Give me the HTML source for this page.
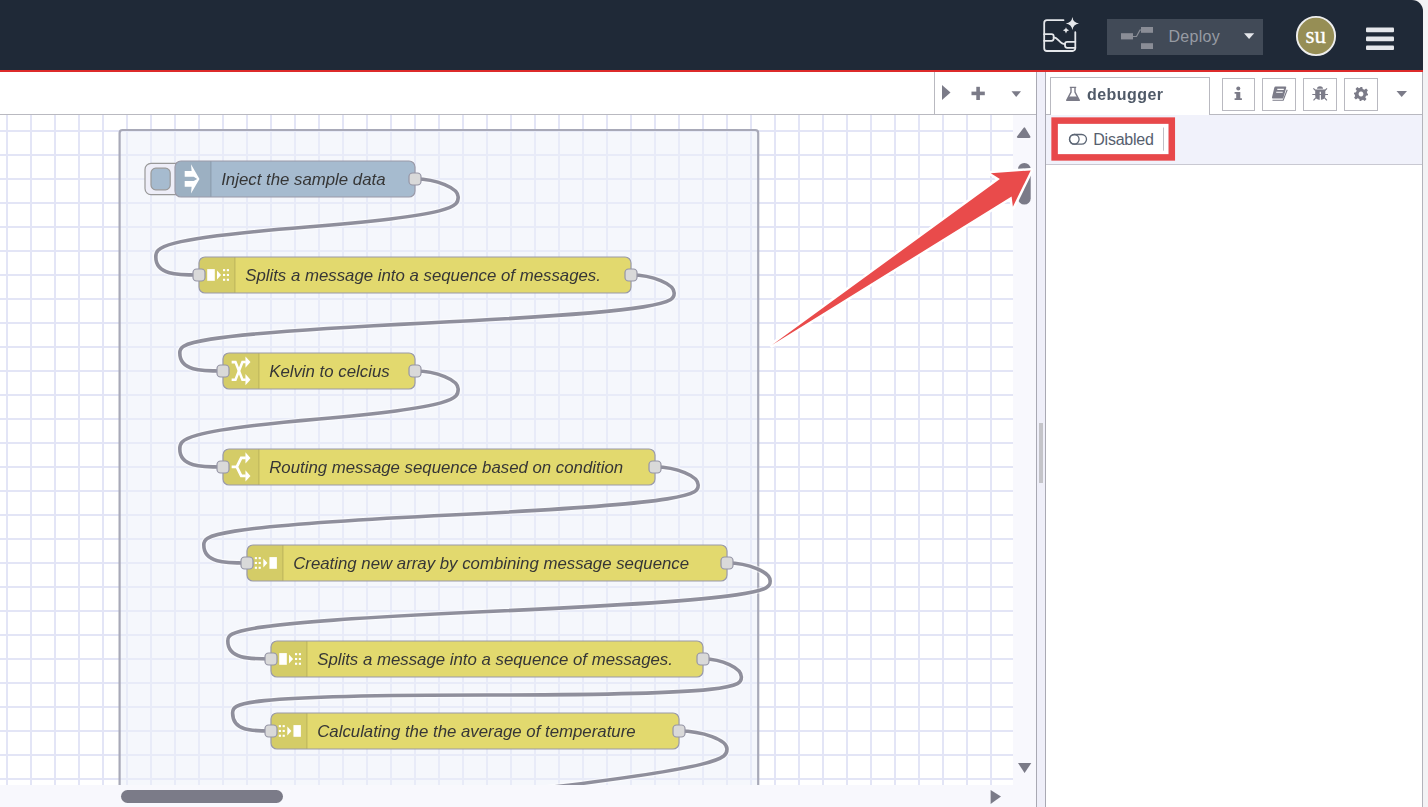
<!DOCTYPE html>
<html>
<head>
<meta charset="utf-8">
<style>
html,body{margin:0;padding:0;}
body{width:1428px;height:807px;overflow:hidden;position:relative;background:#f3f3f5;font-family:"Liberation Sans",sans-serif;}
.abs{position:absolute;}
#header{left:0;top:0;width:1423px;height:70px;background:#1f2937;border-top-right-radius:11px;}
#redline{left:0;top:70px;width:1423px;height:2px;background:#dd2b2b;border-bottom:1px solid #d3dbe0;}
#main{left:0;top:72px;width:1423px;height:735px;background:#fff;}
#ws-tabs{left:0;top:72px;width:1036px;height:42px;background:#fff;border-bottom:1px solid #b9b9c0;}
#ws-btns{left:934px;top:72px;width:102px;height:42px;border-left:1px solid #b9b9c0;}
#canvas{left:0;top:115px;width:1013px;height:670px;overflow:hidden;will-change:transform;}
#vscroll{left:1013px;top:115px;width:23px;height:670px;background:#f8f8fd;}
#hscroll{left:0;top:785px;width:1036px;height:22px;background:#f8f8fd;}
#ws-border{left:1036px;top:72px;width:1px;height:735px;background:#a9a9b3;}
#sep{left:1037px;top:72px;width:8px;height:735px;background:#efeff9;}
#sb-border{left:1045px;top:72px;width:1px;height:735px;background:#a9a9b3;}
#sidebar{left:1046px;top:72px;width:376px;height:735px;background:#fff;}
#sb-rborder{left:1422px;top:72px;width:1px;height:735px;background:#b3b3bb;}
#sb-tabs{left:1046px;top:72px;width:376px;height:42px;border-bottom:1px solid #b9b9c0;}
#sb-tab{left:1050px;top:77px;width:158px;height:37px;border:1px solid #b9b9c0;border-bottom:none;background:#fff;}
#sb-toolbar{left:1046px;top:115px;width:376px;height:49px;background:#f1f2fb;border-bottom:1px solid #c9c9d2;}
.tbtn{position:absolute;top:78px;width:31px;height:31px;border:1px solid #b9b9c0;background:#fff;}
</style>
</head>
<body>
<div class="abs" id="main"></div>
<div class="abs" id="header">
  <svg class="abs" style="left:0;top:0" width="1423" height="70">
    <!-- AI icon -->
    <g fill="none" stroke="#e5e7eb" stroke-width="1.8" stroke-linecap="round">
      <path d="M1063.5 20.2 H1047 A2.8 2.8 0 0 0 1044.2 23 V48.2 A2.8 2.8 0 0 0 1047 51 H1072.5 A2.8 2.8 0 0 0 1075.3 48.2 V32.2"/>
      <path d="M1044.2 34.2 H1051.5 A2.2 2.2 0 0 1 1053.7 36.4 V38.6 A2.2 2.2 0 0 1 1051.5 40.8 H1044.2"/>
      <path d="M1053.7 37.4 C1058 37.4 1060 44.2 1065 44.2"/>
      <path d="M1075.3 41.8 H1067.2 A2.2 2.2 0 0 0 1065 44 V45.6 A2.2 2.2 0 0 0 1067.2 47.8 H1075.3"/>
    </g>
    <path fill="#e5e7eb" d="M1072.4 17 Q1073.2 22.8 1079 23.5 Q1073.2 24.2 1072.4 30 Q1071.6 24.2 1065.8 23.5 Q1071.6 22.8 1072.4 17Z"/>
    <path fill="#e5e7eb" d="M1066 27.2 Q1066.4 29.9 1069.1 30.3 Q1066.4 30.7 1066 33.4 Q1065.6 30.7 1062.9 30.3 Q1065.6 29.9 1066 27.2Z"/>
    <!-- deploy button -->
    <rect x="1107" y="19" width="156" height="36" fill="#414a57"/>
    <g fill="#8a8d96">
      <rect x="1121" y="33.2" width="12" height="6.2"/>
      <rect x="1141" y="27" width="12" height="5.8"/>
      <rect x="1141" y="43.2" width="12" height="5.8"/>
      <path d="M1133 36.5 L1136.5 36.5 L1140 30 L1141 30" fill="none" stroke="#8a8d96" stroke-width="1.2"/>
    </g>
    <text x="1168.5" y="41.8" font-family="Liberation Sans" font-size="16" letter-spacing="0.3" fill="#979ba3">Deploy</text>
    <path d="M1244 33.3 H1254.2 L1249.1 39.1Z" fill="#e5e7eb"/>
    <!-- avatar -->
    <circle cx="1316" cy="36" r="19.1" fill="#968e55" stroke="#eeeeee" stroke-width="1.9"/>
    <text x="1315.7" y="42.8" text-anchor="middle" font-family="Liberation Serif" font-size="23" fill="#fff" stroke="#fff" stroke-width="0.3">su</text>
    <!-- hamburger -->
    <rect x="1366" y="27.6" width="28" height="4.6" rx="1" fill="#e5e7eb"/>
    <rect x="1366" y="36.6" width="28" height="4.6" rx="1" fill="#e5e7eb"/>
    <rect x="1366" y="45.5" width="28" height="4.6" rx="1" fill="#e5e7eb"/>
  </svg>
</div>
<div class="abs" id="redline"></div>

<div class="abs" id="ws-tabs"></div>
<div class="abs" id="ws-btns">
  <svg class="abs" style="left:-935px;top:-72px" width="1036" height="114">
    <path d="M942 85 L950.5 92.5 L942 100Z" fill="#7b7b88"/>
    <rect x="971.5" y="91.6" width="13.3" height="3.6" fill="#7b7b88"/>
    <rect x="976.3" y="86.8" width="3.6" height="13.2" fill="#7b7b88"/>
    <path d="M1011.5 91.3 H1021 L1016.2 97Z" fill="#7b7b88"/>
  </svg>
</div>
<div class="abs" id="canvas">
  <svg width="1013" height="670" style="display:block"><rect x="0" y="0" width="1013" height="670" fill="#fff"/><rect x="119.6" y="15" width="638.6" height="700" rx="3" fill="#f5f7fc"/><path d="M7 0V680 M31 0V680 M55 0V680 M79 0V680 M103 0V680 M127 0V680 M151 0V680 M175 0V680 M199 0V680 M223 0V680 M247 0V680 M271 0V680 M295 0V680 M319 0V680 M343 0V680 M367 0V680 M391 0V680 M415 0V680 M439 0V680 M463 0V680 M487 0V680 M511 0V680 M535 0V680 M559 0V680 M583 0V680 M607 0V680 M631 0V680 M655 0V680 M679 0V680 M703 0V680 M727 0V680 M751 0V680 M775 0V680 M799 0V680 M823 0V680 M847 0V680 M871 0V680 M895 0V680 M919 0V680 M943 0V680 M967 0V680 M991 0V680 M0 16H1013 M0 40H1013 M0 64H1013 M0 88H1013 M0 112H1013 M0 136H1013 M0 160H1013 M0 184H1013 M0 208H1013 M0 232H1013 M0 256H1013 M0 280H1013 M0 304H1013 M0 328H1013 M0 352H1013 M0 376H1013 M0 400H1013 M0 424H1013 M0 448H1013 M0 472H1013 M0 496H1013 M0 520H1013 M0 544H1013 M0 568H1013 M0 592H1013 M0 616H1013 M0 640H1013 M0 664H1013" stroke="#e3e5f6" stroke-width="2" fill="none"/><rect x="119.6" y="15" width="638.6" height="700" rx="3" fill="#f5f7fc" fill-opacity="0.3" stroke="#a8a9b8" stroke-width="2.2"/><g transform="translate(7,-104) scale(1.2)"><path d="M 340 140 C 358.0 140 376.0 147.5 376.0 155.0 S 376.0 170.0 250 180 S 124.0 197.5 124.0 205.0 C 124.0 220 142.0 220 160 220" fill="none" stroke="#fff" stroke-width="5" stroke-linecap="round" stroke-opacity="0.5"/><path d="M 340 140 C 358.0 140 376.0 147.5 376.0 155.0 S 376.0 170.0 250 180 S 124.0 197.5 124.0 205.0 C 124.0 220 142.0 220 160 220" fill="none" stroke="#8f8f9c" stroke-width="3"/><path d="M 520 220 C 538.0 220 556.0 227.5 556.0 235.0 S 556.0 250.0 350 260 S 144.0 277.5 144.0 285.0 C 144.0 300 162.0 300 180 300" fill="none" stroke="#fff" stroke-width="5" stroke-linecap="round" stroke-opacity="0.5"/><path d="M 520 220 C 538.0 220 556.0 227.5 556.0 235.0 S 556.0 250.0 350 260 S 144.0 277.5 144.0 285.0 C 144.0 300 162.0 300 180 300" fill="none" stroke="#8f8f9c" stroke-width="3"/><path d="M 340 300 C 358.0 300 376.0 307.5 376.0 315.0 S 376.0 330.0 260 340 S 144.0 357.5 144.0 365.0 C 144.0 380 162.0 380 180 380" fill="none" stroke="#fff" stroke-width="5" stroke-linecap="round" stroke-opacity="0.5"/><path d="M 340 300 C 358.0 300 376.0 307.5 376.0 315.0 S 376.0 330.0 260 340 S 144.0 357.5 144.0 365.0 C 144.0 380 162.0 380 180 380" fill="none" stroke="#8f8f9c" stroke-width="3"/><path d="M 540 380 C 558.0 380 576.0 387.5 576.0 395.0 S 576.0 410.0 370 420 S 164.0 437.5 164.0 445.0 C 164.0 460 182.0 460 200 460" fill="none" stroke="#fff" stroke-width="5" stroke-linecap="round" stroke-opacity="0.5"/><path d="M 540 380 C 558.0 380 576.0 387.5 576.0 395.0 S 576.0 410.0 370 420 S 164.0 437.5 164.0 445.0 C 164.0 460 182.0 460 200 460" fill="none" stroke="#8f8f9c" stroke-width="3"/><path d="M 600 460 C 618.0 460 636.0 467.5 636.0 475.0 S 636.0 490.0 410 500 S 184.0 517.5 184.0 525.0 C 184.0 540 202.0 540 220 540" fill="none" stroke="#fff" stroke-width="5" stroke-linecap="round" stroke-opacity="0.5"/><path d="M 600 460 C 618.0 460 636.0 467.5 636.0 475.0 S 636.0 490.0 410 500 S 184.0 517.5 184.0 525.0 C 184.0 540 202.0 540 220 540" fill="none" stroke="#8f8f9c" stroke-width="3"/><path d="M 580 540 C 596.0 540 612.0 547.5 612.0 555.0 S 612.0 570 400 570 S 188.0 577.5 188.0 585.0 C 188.0 600 204.0 600 220 600" fill="none" stroke="#fff" stroke-width="5" stroke-linecap="round" stroke-opacity="0.5"/><path d="M 580 540 C 596.0 540 612.0 547.5 612.0 555.0 S 612.0 570 400 570 S 188.0 577.5 188.0 585.0 C 188.0 600 204.0 600 220 600" fill="none" stroke="#8f8f9c" stroke-width="3"/><path d="M 560 600 C 580.0 600 600.0 607.5 600.0 615.0 S 600.0 630.0 427 650 S 255.0 677.5 255.0 685.0 C 255.0 700 275.0 700 295 700" fill="none" stroke="#fff" stroke-width="5" stroke-linecap="round" stroke-opacity="0.5"/><path d="M 560 600 C 580.0 600 600.0 607.5 600.0 615.0 S 600.0 630.0 427 650 S 255.0 677.5 255.0 685.0 C 255.0 700 275.0 700 295 700" fill="none" stroke="#8f8f9c" stroke-width="3"/><g transform="translate(140,125)"><rect x="-25" y="2" width="32" height="26" rx="5" fill="#eeeef8" stroke="#999" stroke-width="1"/><rect x="-20" y="6" width="16" height="18" rx="4" fill="#a6bbcf" stroke="#999" stroke-width="1"/><rect x="0" y="0" width="200" height="30" rx="5" fill="#a6bbcf" stroke="#9a9aa8" stroke-width="1"/><path d="M5 0.5 H30 V29.5 H5 A4.5 4.5 0 0 1 0.5 25 V5 A4.5 4.5 0 0 1 5 0.5Z" fill="#000" fill-opacity="0.06"/><path d="M30 0.5 V29.5" stroke="#000" stroke-opacity="0.12" stroke-width="1"/><path d="M13.33 2.7 L20.4 14.9 L13.33 27.1 L13.83 21.4 L8.08 21.4 L8.08 16.7 L15.6 16.7 L18.5 14.9 L15.6 13.1 L8.08 13.1 L8.08 8.4 L13.83 8.4 Z" fill="#fff"/><text x="38.5" y="20" font-family="Liberation Sans" font-style="italic" font-size="14" fill="#363636">Inject the sample data</text><rect x="195" y="10" width="10" height="10" rx="3" fill="#d9d9d9" stroke="#9595a5" stroke-width="1"/></g><g transform="translate(160,205)"><rect x="0" y="0" width="360" height="30" rx="5" fill="#e2d96e" stroke="#9a9aa8" stroke-width="1"/><path d="M5 0.5 H30 V29.5 H5 A4.5 4.5 0 0 1 0.5 25 V5 A4.5 4.5 0 0 1 5 0.5Z" fill="#000" fill-opacity="0.06"/><path d="M30 0.5 V29.5" stroke="#000" stroke-opacity="0.12" stroke-width="1"/><rect x="6.83" y="10.08" width="6.34" height="9.75" fill="#fff"/><path d="M15 11.33 L18.4 15 L15 18.75Z" fill="#fff"/><rect x="20.0" y="10.08" width="1.8" height="1.75" fill="#fff"/><rect x="20.0" y="14.1" width="1.8" height="1.75" fill="#fff"/><rect x="20.0" y="18.1" width="1.8" height="1.75" fill="#fff"/><rect x="23.2" y="10.08" width="1.8" height="1.75" fill="#fff"/><rect x="23.2" y="14.1" width="1.8" height="1.75" fill="#fff"/><rect x="23.2" y="18.1" width="1.8" height="1.75" fill="#fff"/><text x="38.5" y="20" font-family="Liberation Sans" font-style="italic" font-size="14" fill="#363636">Splits a message into a sequence of messages.</text><rect x="-5" y="10" width="10" height="10" rx="3" fill="#d9d9d9" stroke="#9595a5" stroke-width="1"/><rect x="355" y="10" width="10" height="10" rx="3" fill="#d9d9d9" stroke="#9595a5" stroke-width="1"/></g><g transform="translate(180,285)"><rect x="0" y="0" width="160" height="30" rx="5" fill="#e2d96e" stroke="#9a9aa8" stroke-width="1"/><path d="M5 0.5 H30 V29.5 H5 A4.5 4.5 0 0 1 0.5 25 V5 A4.5 4.5 0 0 1 5 0.5Z" fill="#000" fill-opacity="0.06"/><path d="M30 0.5 V29.5" stroke="#000" stroke-opacity="0.12" stroke-width="1"/><path d="M7.2 7.6 H10.4 L16.2 22.2 H19" fill="none" stroke="#fff" stroke-width="2.1"/><path d="M7.2 22.3 H10.4 L16.2 7.5 H19" fill="none" stroke="#fff" stroke-width="2.1"/><path d="M18.7 2.9 L22.9 7.5 L18.7 12.2Z" fill="#fff"/><path d="M18.7 17.5 L22.9 22.2 L18.7 26.9Z" fill="#fff"/><text x="38.5" y="20" font-family="Liberation Sans" font-style="italic" font-size="14" fill="#363636">Kelvin to celcius</text><rect x="-5" y="10" width="10" height="10" rx="3" fill="#d9d9d9" stroke="#9595a5" stroke-width="1"/><rect x="155" y="10" width="10" height="10" rx="3" fill="#d9d9d9" stroke="#9595a5" stroke-width="1"/></g><g transform="translate(180,365)"><rect x="0" y="0" width="360" height="30" rx="5" fill="#e2d96e" stroke="#9a9aa8" stroke-width="1"/><path d="M5 0.5 H30 V29.5 H5 A4.5 4.5 0 0 1 0.5 25 V5 A4.5 4.5 0 0 1 5 0.5Z" fill="#000" fill-opacity="0.06"/><path d="M30 0.5 V29.5" stroke="#000" stroke-opacity="0.12" stroke-width="1"/><path d="M7.2 14.9 H11.5 L15.2 7.4 H19 M11.5 14.9 L15.2 22.4 H19" fill="none" stroke="#fff" stroke-width="2.3"/><path d="M18.7 2.7 L22.9 7.4 L18.7 12.1Z" fill="#fff"/><path d="M18.7 17.7 L22.9 22.4 L18.7 27.1Z" fill="#fff"/><text x="38.5" y="20" font-family="Liberation Sans" font-style="italic" font-size="14" fill="#363636">Routing message sequence based on condition</text><rect x="-5" y="10" width="10" height="10" rx="3" fill="#d9d9d9" stroke="#9595a5" stroke-width="1"/><rect x="355" y="10" width="10" height="10" rx="3" fill="#d9d9d9" stroke="#9595a5" stroke-width="1"/></g><g transform="translate(200,445)"><rect x="0" y="0" width="400" height="30" rx="5" fill="#e2d96e" stroke="#9a9aa8" stroke-width="1"/><path d="M5 0.5 H30 V29.5 H5 A4.5 4.5 0 0 1 0.5 25 V5 A4.5 4.5 0 0 1 5 0.5Z" fill="#000" fill-opacity="0.06"/><path d="M30 0.5 V29.5" stroke="#000" stroke-opacity="0.12" stroke-width="1"/><rect x="6.5" y="10.08" width="1.8" height="1.75" fill="#fff"/><rect x="6.5" y="14.1" width="1.8" height="1.75" fill="#fff"/><rect x="6.5" y="18.1" width="1.8" height="1.75" fill="#fff"/><rect x="9.7" y="10.08" width="1.8" height="1.75" fill="#fff"/><rect x="9.7" y="14.1" width="1.8" height="1.75" fill="#fff"/><rect x="9.7" y="18.1" width="1.8" height="1.75" fill="#fff"/><path d="M13.6 11.33 L17 15 L13.6 18.75Z" fill="#fff"/><rect x="18.7" y="10.08" width="6.2" height="9.75" fill="#fff"/><text x="38.5" y="20" font-family="Liberation Sans" font-style="italic" font-size="14" fill="#363636">Creating new array by combining message sequence</text><rect x="-5" y="10" width="10" height="10" rx="3" fill="#d9d9d9" stroke="#9595a5" stroke-width="1"/><rect x="395" y="10" width="10" height="10" rx="3" fill="#d9d9d9" stroke="#9595a5" stroke-width="1"/></g><g transform="translate(220,525)"><rect x="0" y="0" width="360" height="30" rx="5" fill="#e2d96e" stroke="#9a9aa8" stroke-width="1"/><path d="M5 0.5 H30 V29.5 H5 A4.5 4.5 0 0 1 0.5 25 V5 A4.5 4.5 0 0 1 5 0.5Z" fill="#000" fill-opacity="0.06"/><path d="M30 0.5 V29.5" stroke="#000" stroke-opacity="0.12" stroke-width="1"/><rect x="6.83" y="10.08" width="6.34" height="9.75" fill="#fff"/><path d="M15 11.33 L18.4 15 L15 18.75Z" fill="#fff"/><rect x="20.0" y="10.08" width="1.8" height="1.75" fill="#fff"/><rect x="20.0" y="14.1" width="1.8" height="1.75" fill="#fff"/><rect x="20.0" y="18.1" width="1.8" height="1.75" fill="#fff"/><rect x="23.2" y="10.08" width="1.8" height="1.75" fill="#fff"/><rect x="23.2" y="14.1" width="1.8" height="1.75" fill="#fff"/><rect x="23.2" y="18.1" width="1.8" height="1.75" fill="#fff"/><text x="38.5" y="20" font-family="Liberation Sans" font-style="italic" font-size="14" fill="#363636">Splits a message into a sequence of messages.</text><rect x="-5" y="10" width="10" height="10" rx="3" fill="#d9d9d9" stroke="#9595a5" stroke-width="1"/><rect x="355" y="10" width="10" height="10" rx="3" fill="#d9d9d9" stroke="#9595a5" stroke-width="1"/></g><g transform="translate(220,585)"><rect x="0" y="0" width="340" height="30" rx="5" fill="#e2d96e" stroke="#9a9aa8" stroke-width="1"/><path d="M5 0.5 H30 V29.5 H5 A4.5 4.5 0 0 1 0.5 25 V5 A4.5 4.5 0 0 1 5 0.5Z" fill="#000" fill-opacity="0.06"/><path d="M30 0.5 V29.5" stroke="#000" stroke-opacity="0.12" stroke-width="1"/><rect x="6.5" y="10.08" width="1.8" height="1.75" fill="#fff"/><rect x="6.5" y="14.1" width="1.8" height="1.75" fill="#fff"/><rect x="6.5" y="18.1" width="1.8" height="1.75" fill="#fff"/><rect x="9.7" y="10.08" width="1.8" height="1.75" fill="#fff"/><rect x="9.7" y="14.1" width="1.8" height="1.75" fill="#fff"/><rect x="9.7" y="18.1" width="1.8" height="1.75" fill="#fff"/><path d="M13.6 11.33 L17 15 L13.6 18.75Z" fill="#fff"/><rect x="18.7" y="10.08" width="6.2" height="9.75" fill="#fff"/><text x="38.5" y="20" font-family="Liberation Sans" font-style="italic" font-size="14" fill="#363636">Calculating the the average of temperature</text><rect x="-5" y="10" width="10" height="10" rx="3" fill="#d9d9d9" stroke="#9595a5" stroke-width="1"/><rect x="335" y="10" width="10" height="10" rx="3" fill="#d9d9d9" stroke="#9595a5" stroke-width="1"/></g></g></svg>
</div>
<div class="abs" id="vscroll">
  <svg width="23" height="670" style="display:block">
    <path d="M11.6 12.8 Q12.3 11.8 13 12.8 L18.3 21.6 Q18.8 23 17.3 23 H5.9 Q4.4 23 4.9 21.6Z" fill="#7b7b88" transform="translate(-0.9,0)"/>
    <rect x="5" y="48" width="12.7" height="41.6" rx="6.3" fill="#7b7b88"/>
    <path d="M5 648 H18.3 L11.6 658Z" fill="#7b7b88"/>
  </svg>
</div>
<div class="abs" id="hscroll">
  <svg width="1036" height="22" style="display:block">
    <rect x="121" y="5" width="162" height="13" rx="6.5" fill="#7b7b88"/>
    <path d="M990.6 5 L1001 11.5 L990.6 19Z" fill="#7b7b88"/>
  </svg>
</div>
<div class="abs" id="ws-border"></div>
<div class="abs" id="sep">
  <div class="abs" style="left:2px;top:351px;width:4px;height:60px;background:#c4c4c9"></div>
</div>
<div class="abs" id="sb-border"></div>
<div class="abs" id="sidebar"></div>
<div class="abs" id="sb-tabs"></div>
<div class="abs" id="sb-tab"></div>
<div class="abs" id="sb-toolbar"></div>
<div class="abs" id="sb-rborder"></div>
<div class="tbtn" style="left:1222px"></div>
<div class="tbtn" style="left:1262px;width:32px"></div>
<div class="tbtn" style="left:1303px;width:32px"></div>
<div class="tbtn" style="left:1344px;width:32px"></div>
<svg class="abs" style="left:0;top:0" width="1428" height="807">
  <!-- flask -->
  <path d="M1069.8 87.4 H1076.2 M1071 87.8 V92.2 L1066.8 100.2 H1079.2 L1075 92.2 V87.8" fill="none" stroke="#7b7b88" stroke-width="1.4" stroke-linejoin="round"/>
  <path d="M1068.7 96.6 H1077.3 L1079.8 101 H1066.2Z" fill="#7b7b88"/>
  <text x="1087" y="99.6" font-family="Liberation Sans" font-weight="bold" font-size="16" letter-spacing="0.45" fill="#505a68">debugger</text>
  <!-- info -->
  <circle cx="1238.3" cy="88.6" r="2" fill="#7b7b88"/><path d="M1234.6 92 H1240.3 V98.2 H1241.9 V100 H1234.6 V98.2 H1236.2 V93.8 H1234.6Z" fill="#7b7b88"/>
  <!-- book -->
  <path d="M1275.6 86.5 H1285.4 Q1286.6 86.5 1286.2 87.8 L1283.2 98.6 H1273 Q1271.6 98.6 1272 97.2 L1274.3 87.7 Q1274.6 86.5 1275.6 86.5Z" fill="#7b7b88"/>
  <path d="M1277.3 89.4 H1283.8 M1276.2 92.3 H1282.7" stroke="#fff" stroke-width="1.1"/>
  <path d="M1272.5 100.2 H1283.2 L1287.2 89.7" fill="none" stroke="#7b7b88" stroke-width="1.1"/>
  <!-- bug -->
  <path d="M1317 88.8 A3 2.6 0 0 1 1323 88.8Z" fill="#7b7b88"/>
  <path d="M1315.2 89.4 H1325.3 V95.8 Q1325.3 99.9 1320.2 99.9 Q1315.2 99.9 1315.2 95.8Z" fill="#7b7b88"/>
  <path d="M1320.3 91.8 V99.9" stroke="#fff" stroke-width="1.2"/>
  <path d="M1312.3 94.5 H1328 M1313.4 88.4 L1315.6 90.6 M1327 88.4 L1324.8 90.6 M1313.5 100.3 L1316 97.6 M1326.9 100.3 L1324.4 97.6" stroke="#7b7b88" stroke-width="1.2"/>
  <!-- gear -->
  <g transform="translate(1361,94)">
    <path fill="#7b7b88" fill-rule="evenodd" d="M-1.3 -7 H1.3 L1.7 -5 L3.4 -4.3 L5.1 -5.5 L6.9 -3.7 L5.8 -2 L6.5 -0.3 L7 0 V1.3 L5 1.7 L4.3 3.4 L5.5 5.1 L3.7 6.9 L2 5.8 L0.3 6.5 L0 7 H-1.3 L-1.7 5 L-3.4 4.3 L-5.1 5.5 L-6.9 3.7 L-5.8 2 L-6.5 0.3 L-7 0 V-1.3 L-5 -1.7 L-4.3 -3.4 L-5.5 -5.1 L-3.7 -6.9 L-2 -5.8 L-0.3 -6.5Z M0 -2.4 A2.4 2.4 0 1 0 0.01 -2.4Z"/>
  </g>
  <path d="M1396.5 91 H1407 L1401.7 97Z" fill="#7b7b88"/>
  <!-- disabled button -->
  <rect x="1058" y="124" width="110" height="30" fill="#fff"/>
  <path d="M1163.5 127.5 V150.7" stroke="#c0c0c8" stroke-width="1"/>
  <g fill="none" stroke="#5c6675" stroke-width="1.3">
    <rect x="1069.5" y="134.5" width="17" height="9.6" rx="4.8"/>
    <circle cx="1074.3" cy="139.3" r="4.8"/>
  </g>
  <text x="1093.3" y="144.6" font-family="Liberation Sans" font-size="16" letter-spacing="-0.25" fill="#56606e">Disabled</text>
  <rect x="1054.6" y="120.6" width="117.2" height="36.8" fill="none" stroke="#e8484a" stroke-width="6.5"/>
  <!-- arrow -->
  <path d="M772 345 L999.9 179 L990.8 173.2 L1030.7 170.4 L1012.9 206.8 L1011.6 196.4 Z" fill="#e94b4b" stroke="#fff" stroke-width="5" stroke-linejoin="round" paint-order="stroke"/>
</svg>
</body>
</html>
